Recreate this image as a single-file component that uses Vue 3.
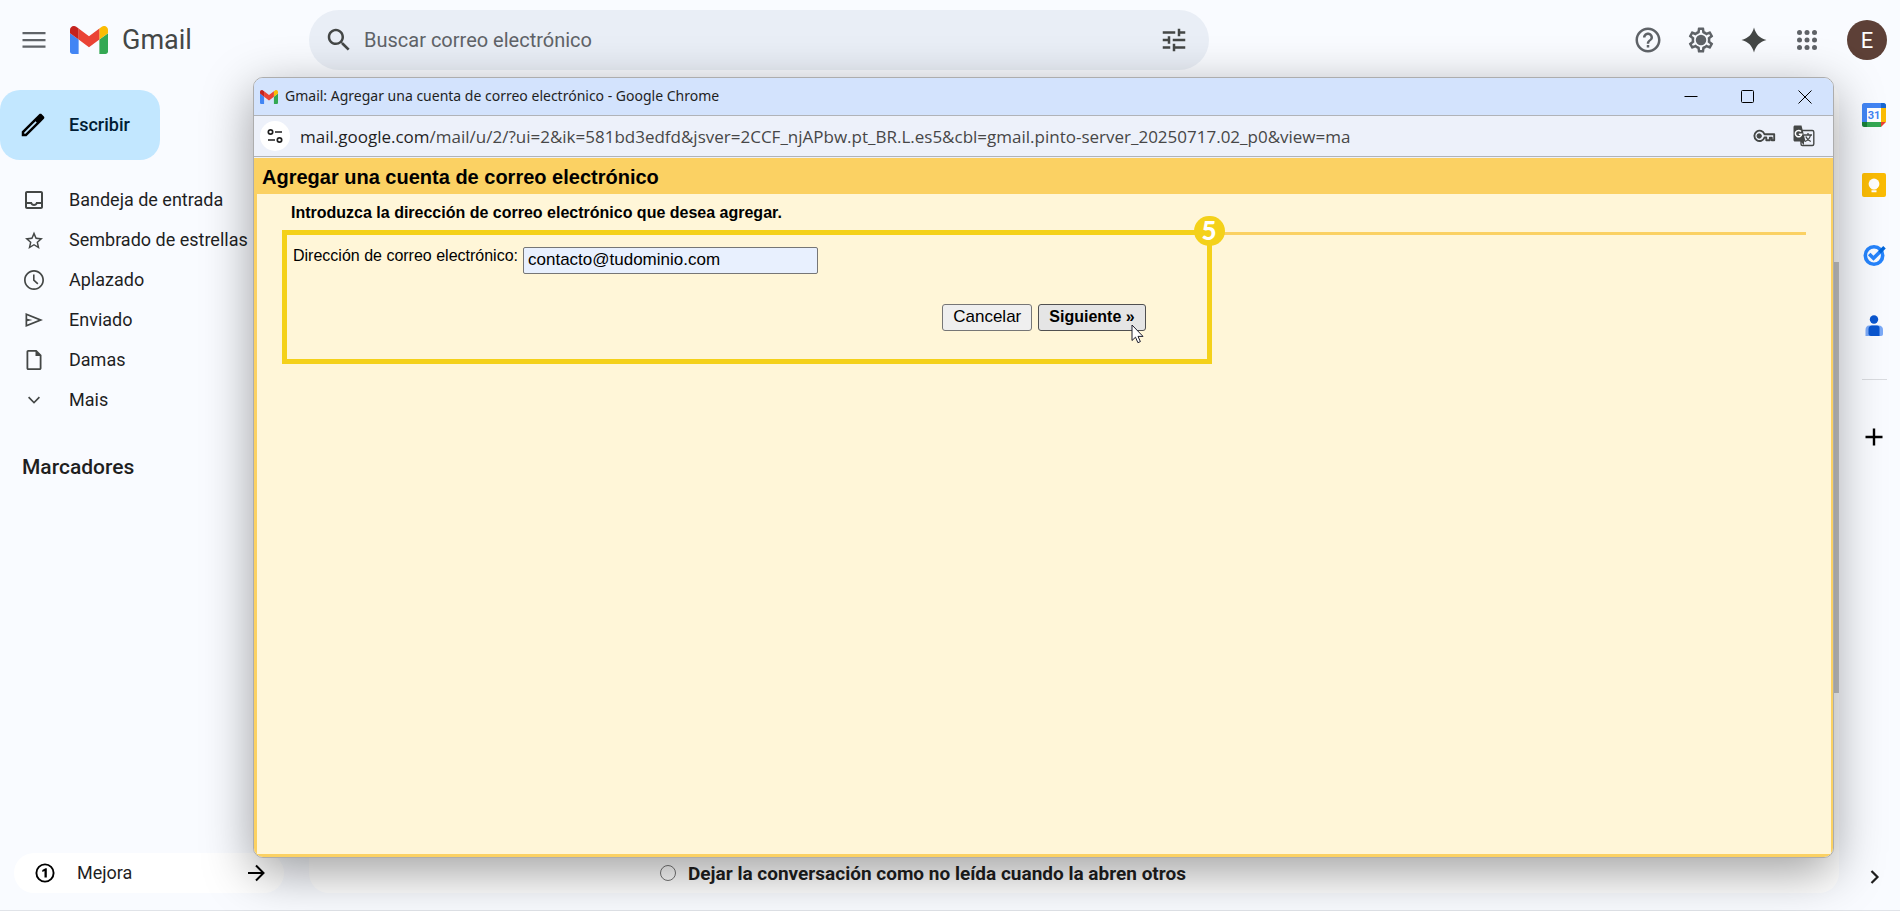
<script setup>
import { ref } from 'vue'

const email = ref('contacto@tudominio.com')
const query = ref('')

const folders = [
  { label: 'Bandeja de entrada', icon: 'M19 3H5c-1.1 0-2 .9-2 2v14c0 1.1.9 2 2 2h14c1.1 0 2-.9 2-2V5c0-1.1-.9-2-2-2zm0 16H5v-3h3.56c.69 1.19 1.97 2 3.45 2s2.75-.81 3.45-2H19v3zm0-5h-4.99c0 1.1-.9 2-2 2s-2-.9-2-2H5V5h14v9z' },
  { label: 'Sembrado de estrellas', icon: 'M21 10.2l-6.5-.6L12 3.600 9.500 9.600 3 10.200l4.900 4.300L6.400 21 12 17.600l5.600 3.400-1.500-6.500L21 10.200zM12 15.900l-3.400 2 .9-3.900-3-2.600 3.900-.3L12 7.400l1.600 3.700 3.900.3-3 2.600.9 3.900-3.400-2z' },
  { label: 'Aplazado', icon: 'M12 2C6.500 2 2 6.500 2 12s4.500 10 10 10 10-4.500 10-10S17.500 2 12 2zm0 18.300c-4.600 0-8.300-3.700-8.300-8.300S7.400 3.700 12 3.700s8.300 3.700 8.300 8.300-3.700 8.300-8.300 8.300zM12.600 6.500h-1.600v6l4.300 4 1.100-1.200-3.800-3.600z' },
  { label: 'Enviado', icon: 'M3.500 5v14L21 12 3.500 5zm1.700 2.600L16.300 12 5.200 16.400v-3.200L10.500 12 5.200 10.800V7.600z' },
  { label: 'Damas', icon: 'M14.500 2H6.200C5.200 2 4.500 2.800 4.500 3.800v16.400c0 1 .8 1.800 1.800 1.800h11.400c1 0 1.800-.8 1.800-1.800V7L14.500 2zm3.200 18.200H6.300V3.800h7.200V8h4.200v12.200z' },
  { label: 'Mais', icon: 'M7.200 8.600L12 13.400l4.800-4.800L18 9.800l-6 6-6-6z' },
]
</script>

<template>
  <div class="app">
    <header class="topbar">
      <button class="icon-btn menu" aria-label="Menú principal">
        <svg width="24" height="24" viewBox="0 0 24 24"><path fill="#5f6368" d="M.500 4h23v2.200H.500zM.500 11h23v2.200H.500zM.500 17.500h23v2.200H.500z" /></svg>
      </button>
      <a class="brand" href="#">
        <svg width="38" height="28" viewBox="52 42 88 66" preserveAspectRatio="none">
          <path fill="#4285f4" d="M58 108h14V74L52 59v43c0 3.320 2.690 6 6 6" />
          <path fill="#34a853" d="M120 108h14c3.320 0 6-2.690 6-6V59l-20 15" />
          <path fill="#fbbc04" d="M120 48v26l20-15v-8c0-7.420-8.470-11.650-14.400-7.200" />
          <path fill="#ea4335" d="M72 74V48l24 18 24-18v26L96 92" />
          <path fill="#c5221f" d="M52 51v8l20 15V48l-5.600-4.200c-5.940-4.450-14.400-.22-14.400 7.200" />
        </svg>
        <span>Gmail</span>
      </a>
      <form class="search" role="search" @submit.prevent>
        <button class="icon-btn" aria-label="Buscar">
          <svg width="30" height="30" viewBox="0 0 24 24"><path fill="#444746" d="M15.500 14h-.79l-.28-.27C15.410 12.590 16 11.110 16 9.500 16 5.910 13.090 3 9.500 3S3 5.910 3 9.500 5.910 16 9.500 16c1.610 0 3.090-.59 4.230-1.570l.27.28v.79l5 4.990L20.490 19l-4.990-5zm-6 0C7.010 14 5 11.990 5 9.500S7.010 5 9.500 5 14 7.010 14 9.500 11.990 14 9.500 14z" /></svg>
        </button>
        <input v-model="query" type="text" aria-label="Buscar correo" placeholder="Buscar correo electrónico" />
        <button class="icon-btn" type="button" aria-label="Opciones de búsqueda">
          <svg width="30" height="30" viewBox="0 0 24 24"><path fill="#444746" d="M3 17v2h6v-2H3zM3 5v2h10V5H3zm10 16v-2h8v-2h-8v-2h-2v6h2zM7 9v2H3v2h4v2h2V9H7zm14 4v-2H11v2h10zm-6-4h2V7h4V5h-4V3h-2v6z" /></svg>
        </button>
      </form>
      <div class="tools">
        <button class="icon-btn" aria-label="Ayuda">
          <svg width="30" height="30" viewBox="0 0 24 24"><path fill="#5f6368" d="M11 18h2v-2h-2v2zm1-16C6.480 2 2 6.480 2 12s4.480 10 10 10 10-4.480 10-10S17.520 2 12 2zm0 18c-4.410 0-8-3.590-8-8s3.590-8 8-8 8 3.590 8 8-3.590 8-8 8zm0-14c-2.210 0-4 1.790-4 4h2c0-1.100.9-2 2-2s2 .9 2 2c0 2-3 1.750-3 5h2c0-2.250 3-2.500 3-5 0-2.210-1.790-4-4-4z" /></svg>
        </button>
        <button class="icon-btn" aria-label="Configuración">
          <svg width="30" height="30" viewBox="0 0 24 24" fill="#5f6368"><path d="M19.430 12.980c.04-.32.07-.64.07-.98s-.03-.66-.07-.98l2.110-1.650c.19-.15.24-.42.12-.64l-2-3.460c-.09-.16-.26-.25-.44-.25-.06 0-.12.01-.17.03l-2.490 1c-.52-.4-1.080-.73-1.690-.98l-.38-2.650C14.460 2.180 14.250 2 14 2h-4c-.25 0-.46.18-.49.42l-.38 2.650c-.61.25-1.170.59-1.690.98l-2.490-1c-.06-.02-.12-.03-.18-.03-.17 0-.34.09-.43.25l-2 3.460c-.13.22-.07.49.12.64l2.110 1.650c-.04.32-.07.65-.07.98s.03.66.07.98l-2.110 1.650c-.19.15-.24.42-.12.64l2 3.460c.09.16.26.25.44.25.06 0 .12-.01.17-.03l2.490-1c.52.4 1.080.73 1.690.98l.38 2.650c.03.24.24.42.49.42h4c.25 0 .46-.18.49-.42l.38-2.650c.61-.25 1.170-.59 1.690-.98l2.490 1c.06.02.12.03.18.03.17 0 .34-.09.43-.25l2-3.460c.12-.22.07-.49-.12-.64l-2.110-1.650zm-1.980-1.710c.04.31.05.52.05.73 0 .21-.02.43-.05.73l-.14 1.130.89.7 1.080.84-.7 1.210-1.270-.51-1.040-.42-.9.68c-.43.32-.84.56-1.250.73l-1.060.43-.16 1.130-.2 1.350h-1.400l-.19-1.350-.16-1.130-1.060-.43c-.43-.18-.83-.41-1.230-.71l-.91-.7-1.060.43-1.270.51-.7-1.210 1.080-.84.89-.7-.14-1.130c-.03-.31-.05-.54-.05-.74s.02-.43.05-.73l.14-1.130-.89-.7-1.080-.84.7-1.210 1.270.51 1.040.42.9-.68c.43-.32.84-.56 1.250-.73l1.060-.43.16-1.130.2-1.350h1.390l.19 1.350.16 1.130 1.060.43c.43.18.83.41 1.230.71l.91.7 1.060-.43 1.270-.51.7 1.210-1.070.85-.89.7.14 1.130z" /><circle cx="12" cy="12" r="4.200" /></svg>
        </button>
        <button class="icon-btn" aria-label="Gemini">
          <svg width="30" height="30" viewBox="0 0 24 24"><path fill="#444746" d="M12 2c1.500 5.500 4.500 8.600 10 10-5.500 1.400-8.500 4.500-10 10-1.500-5.500-4.500-8.600-10-10 5.500-1.400 8.500-4.500 10-10z" /></svg>
        </button>
        <button class="icon-btn" aria-label="Aplicaciones de Google">
          <svg width="30" height="30" viewBox="0 0 24 24" fill="#5f6368"><circle v-for="n in 9" :key="n" :cx="6 + ((n - 1) % 3) * 6" :cy="6 + Math.floor((n - 1) / 3) * 6" r="2" /></svg>
        </button>
      </div>
      <button class="avatar" aria-label="Cuenta de Google">E</button>
    </header>

    <div class="body">
      <aside class="sidebar">
        <button class="compose">
          <svg width="30" height="30" viewBox="0 0 24 24"><path d="M14.060 9.020l.92.92L5.920 19H5v-.92l9.060-9.060M18 3c-.45 0-.81.1-1.100.39l-1.770 1.730L14.060 6.190 3 17.250V21h3.750L17.810 9.940l2.900-2.900c.5-.6.5-1.220 0-1.810l-1.740-1.840C18.700 3.100 18.400 3 18 3z" /></svg>
          <span>Escribir</span>
        </button>
        <nav class="folders" aria-label="Carpetas">
          <a v-for="f in folders" :key="f.label" href="#">
            <svg width="24" height="24" viewBox="0 0 24 24"><path fill="#444746" :d="f.icon" /></svg>
            <span>{{ f.label }}</span>
          </a>
        </nav>
        <h2>Marcadores</h2>
        <a class="upgrade" href="#">
          <svg width="24" height="24" viewBox="0 0 24 24"><circle cx="12" cy="12" r="8.600" fill="none" stroke="#000" stroke-width="1.900" /><path d="M11.500 16.500V10l-2.200 1V9l3.200-1.800h1.300v9.300z" /></svg>
          <span>Mejora</span>
          <svg width="20" height="20" viewBox="0 0 20 20" fill="none" stroke="#000" stroke-width="2"><path d="M1 10h15M9 2.500l7.500 7.500-7.500 7.500" /></svg>
        </a>
      </aside>

      <main class="content">
        <div class="scrollbar"></div>
        <label class="option">
          <input type="radio" name="leido" />
          Dejar la conversación como no leída cuando la abren otros
        </label>
      </main>

      <aside class="rail">
        <a href="#" aria-label="Calendar">
          <svg width="24" height="24" viewBox="0 0 24 24">
            <path fill="#fff" d="M5 5h14v14H5z" />
            <path fill="#4285f4" d="M2 0h17v5H5v14H0V2C0 1 1 0 2 0z" />
            <path fill="#1967d2" d="M19 0h3c1 0 2 1 2 2v3h-5z" />
            <path fill="#fbbc04" d="M19 5h5v14h-5z" />
            <path fill="#34a853" d="M5 19h14v5H5z" />
            <path fill="#188038" d="M0 19h5v5H2c-1 0-2-1-2-2z" />
            <path fill="#ea4335" d="M19 19h5l-5 5z" />
            <text x="12" y="16" text-anchor="middle" class="day">31</text>
          </svg>
        </a>
        <a href="#" aria-label="Keep">
          <svg width="24" height="24" viewBox="0 0 24 24"><rect width="24" height="24" rx="2" fill="#fbbc04" /><circle cx="12" cy="11" r="5.400" fill="#fff" /><path fill="#fff" d="M9.500 14h5v2.200h-5zM9.500 17.200h5v2h-5z" /></svg>
        </a>
        <a href="#" aria-label="Tasks">
          <svg width="24" height="24" viewBox="0 0 24 24">
            <circle cx="12" cy="12.500" r="8.700" fill="none" stroke="#2684fc" stroke-width="3.600" />
            <path fill="none" stroke="#2684fc" stroke-width="3.600" d="M7.200 11l4.300 4.300 7-7" />
            <path fill="none" stroke="#0066da" stroke-width="3.600" d="M17.500 9.300l5-5" />
          </svg>
        </a>
        <a href="#" aria-label="Contactos">
          <svg width="24" height="24" viewBox="0 0 24 24">
            <path fill="#7baaf7" d="M7 12.500h9.500c3 0 4.500 1.500 4.500 4.500v4c0 1-.7 2-2 2H3.500V17c0-3 1.500-4.500 3.500-4.500z" />
            <path fill="#0b57d0" d="M10 12.500h5c1.600 0 2.500 1 2.500 2.500v8H9c-1.500 0-2.500-1-2.500-2.500V16c0-2 1.500-3.500 3.500-3.500z" />
            <circle cx="12" cy="6.500" r="4.200" fill="#0b57d0" />
          </svg>
        </a>
        <hr />
        <button class="icon-btn" aria-label="Obtener complementos">
          <svg width="24" height="24" viewBox="0 0 24 24" stroke="#000" stroke-width="2.400"><path d="M12 3.500v17M3.500 12h17" /></svg>
        </button>
        <button class="icon-btn collapse" aria-label="Ocultar panel lateral">
          <svg width="24" height="24" viewBox="0 0 24 24" fill="none" stroke="#1f1f1f" stroke-width="2.200"><path d="M9.500 6l6 6-6 6" /></svg>
        </button>
      </aside>
    </div>

    <section class="window" role="dialog" aria-labelledby="window-title">
      <div class="titlebar">
        <svg width="18" height="14" viewBox="52 42 88 66" preserveAspectRatio="none">
          <path fill="#4285f4" d="M58 108h14V74L52 59v43c0 3.320 2.690 6 6 6" />
          <path fill="#34a853" d="M120 108h14c3.320 0 6-2.690 6-6V59l-20 15" />
          <path fill="#fbbc04" d="M120 48v26l20-15v-8c0-7.420-8.470-11.650-14.400-7.200" />
          <path fill="#ea4335" d="M72 74V48l24 18 24-18v26L96 92" />
          <path fill="#c5221f" d="M52 51v8l20 15V48l-5.600-4.200c-5.940-4.450-14.400-.22-14.400 7.200" />
        </svg>
        <span id="window-title">Gmail: Agregar una cuenta de correo electrónico - Google Chrome</span>
        <div class="controls">
          <button aria-label="Minimizar"><svg width="14" height="14" viewBox="0 0 14 14"><path d="M.5 6.500h13" /></svg></button>
          <button aria-label="Maximizar"><svg width="14" height="14" viewBox="0 0 14 14"><rect x=".5" y=".5" width="12" height="12" rx="1" /></svg></button>
          <button aria-label="Cerrar"><svg width="14" height="14" viewBox="0 0 14 14"><path d="M.5.5l13 13M13.500.5l-13 13" /></svg></button>
        </div>
      </div>
      <div class="addressbar">
        <button class="site-info" aria-label="Información del sitio">
          <svg width="16" height="16" viewBox="0 0 16 16" fill="none" stroke="#1f1f1f" stroke-width="1.700"><circle cx="3.500" cy="4" r="2.200" /><path d="M8 4h7M1 12h7" /><circle cx="12.500" cy="12" r="2.200" /></svg>
        </button>
        <div class="url"><b>mail.google.com</b>/mail/u/2/?ui=2&amp;ik=581bd3edfd&amp;jsver=2CCF_njAPbw.pt_BR.L.es5&amp;cbl=gmail.pinto-server_20250717.02_p0&amp;view=ma</div>
        <button class="icon-btn" aria-label="Administrar contraseñas">
          <svg width="24" height="24" viewBox="0 0 24 24" fill="none" stroke="#444746" stroke-width="1.900"><path d="M12.500 10.200h9.700v6h-2.400v-2.500h-2v2.500h-3.500v-2.700h-1.800a5.200 5.200 0 1 1 0-3.300z" stroke-linejoin="round" /><circle cx="7.200" cy="12" r="2.200" fill="#444746" stroke-width="1" /></svg>
        </button>
        <button class="icon-btn" aria-label="Traducir esta página">
          <svg width="24" height="24" viewBox="0 0 24 24">
            <rect x="9" y="6.500" width="12.800" height="15" rx="1.500" fill="#edf1fa" stroke="#444746" stroke-width="1.400" />
            <path fill="none" stroke="#444746" stroke-width="1.300" d="M12 11h8M16 9v2M18.500 11c-.5 3-3 5.500-5.500 6.500M13.800 12.500c.8 2.200 2.800 4 5 5" />
            <path fill="#444746" d="M3 1.500h6.500l4 16-1.500 0 0 3.500-3.500-3.500H3c-.9 0-1.500-.6-1.500-1.500V3c0-.9.6-1.500 1.500-1.500z" />
            <path fill="none" stroke="#fff" stroke-width="1.500" d="M9 7.500a3.200 3.200 0 1 0 .7 2.800H6.800" />
          </svg>
        </button>
      </div>
      <div class="page">
        <h1>Agregar una cuenta de correo electrónico</h1>
        <div class="sheet">
          <p>Introduzca la dirección de correo electrónico que desea agregar.</p>
          <hr />
          <form class="highlight" @submit.prevent>
            <div class="field">
              <label for="email">Dirección de correo electrónico:</label>
              <input id="email" v-model="email" type="text" />
            </div>
            <div class="actions">
              <button type="button">Cancelar</button>
              <button type="submit" class="next">Siguiente »
                <svg class="cursor" width="14" height="20" viewBox="0 0 14 20"><path fill="#fff" stroke="#1c1c2c" d="M1 1v15.500l3.500-3.300 2.400 5.500 2.500-1.100-2.400-5.200h5z" /></svg>
              </button>
            </div>
            <div class="badge">5</div>
          </form>
        </div>
      </div>
    </section>
  </div>
</template>

<style>
html,
body {
  overflow: hidden;
  background: #f8fafd;
}
</style>

<style scoped>
.app {
  position: relative;
  box-sizing: border-box;
  display: flex;
  flex-direction: column;
  height: 100vh;
  background: #f9fbff;
  border-bottom: 1px solid #e0e3e8;
  color: #1f1f1f;
  font-family: Roboto, "Liberation Sans", sans-serif;
}
svg { display: block; flex: none; }
button { font: inherit; color: inherit; cursor: default; }
a { color: inherit; text-decoration: none; }
.icon-btn { display: flex; padding: 0; border: 0; background: none; }

.topbar {
  display: flex;
  align-items: center;
  flex: none;
  height: 80px;
  padding: 0 13px 0 22px;
}
.brand {
  display: flex;
  align-items: center;
  gap: 14px;
  width: 239px;
  margin-left: 24px;
  color: #444746;
  font-size: 27px;
}
.search {
  box-sizing: border-box;
  display: flex;
  align-items: center;
  gap: 10px;
  flex: 0 1 900px;
  height: 60px;
  padding: 0 20px 0 15px;
  border-radius: 30px;
  background: #e9eef6;
}
.search input {
  flex: 1;
  min-width: 0;
  padding: 0;
  border: 0;
  outline: 0;
  background: none;
  font: 20px Roboto, sans-serif;
}
.search input::placeholder { color: #5f6368; opacity: 1; }
.tools { display: flex; gap: 23px; margin: 0 25px 0 auto; }
.avatar {
  width: 40px;
  height: 40px;
  padding: 0;
  border: 0;
  border-radius: 50%;
  background: #5d4037;
  color: #fff;
  font-size: 22px;
}

.body { display: flex; flex: 1; min-height: 0; }
.sidebar {
  box-sizing: border-box;
  display: flex;
  flex-direction: column;
  flex: none;
  width: 309px;
  padding: 10px 25px 17px 0;
}
.compose {
  display: flex;
  align-items: center;
  align-self: flex-start;
  gap: 21px;
  height: 70px;
  padding: 0 30px 0 18px;
  border: 0;
  border-radius: 20px;
  background: #c2e7ff;
  color: #001d35;
  font-size: 18px;
  font-weight: 500;
}
.compose span,
.folders span,
.upgrade span { padding-bottom: 2px; }
.folders { margin-top: 20px; }
.folders a {
  display: flex;
  align-items: center;
  gap: 23px;
  height: 40px;
  padding-left: 22px;
  font-size: 18px;
  white-space: nowrap;
}
.sidebar h2 { margin: 35px 0 0 22px; font-size: 21px; font-weight: 500; line-height: 24px; }
.upgrade {
  display: flex;
  align-items: center;
  height: 40px;
  margin: auto 0 0 14px;
  padding: 0 17px 0 19px;
  border-radius: 20px;
  background: #fff;
  font-size: 18px;
}
.upgrade span { flex: 1; margin-left: 20px; }

.content {
  position: relative;
  display: flex;
  align-items: flex-end;
  flex: 1;
  margin-bottom: 17px;
  border-radius: 20px;
  background: #fff;
}
.scrollbar {
  position: absolute;
  top: 182px;
  right: 0;
  width: 12px;
  height: 431px;
  background: #c7c7c7;
}
.option {
  display: flex;
  align-items: center;
  gap: 12px;
  height: 40px;
  margin-left: 351px;
  font-size: 19px;
  font-weight: 700;
}
.option input { width: 16px; height: 16px; margin: 0; }

.rail {
  display: flex;
  flex-direction: column;
  align-items: center;
  gap: 46px;
  flex: none;
  box-sizing: border-box;
  width: 52px;
  margin-left: 9px;
  padding: 23px 0 21px;
}
.rail hr { width: 25px; height: 1px; margin: -4px 0 -1px; border: 0; background: #dadce0; }
.collapse { margin-top: auto; }
.day { fill: #4285f4; font: bold 11px Roboto, sans-serif; }

.window {
  position: absolute;
  inset: 77px 66px 52px 253px;
  display: flex;
  flex-direction: column;
  overflow: hidden;
  border: 1px solid #adadad;
  border-radius: 10px;
  background: #edf1fa;
  box-shadow: 0 14px 50px rgba(0, 0, 0, 0.38);
}
.titlebar {
  display: flex;
  align-items: center;
  gap: 7px;
  flex: none;
  height: 37px;
  padding-left: 6px;
  border-bottom: 1px solid #b0b3b8;
  background: #d3e3fd;
  color: #1f1f1f;
  font: 14px "Noto Sans", sans-serif;
}
.titlebar > span { padding-bottom: 2px; }
.controls { display: flex; margin-left: auto; }
.controls button {
  display: grid;
  place-items: center;
  width: 57px;
  height: 36px;
  padding: 0;
  border: 0;
  background: none;
}
.controls svg { fill: none; stroke: #000; }
.addressbar {
  display: flex;
  align-items: center;
  flex: none;
  height: 40px;
  gap: 16px;
  padding: 0 17px 0 6px;
  border-bottom: 1px solid #b0b3b8;
}
.site-info {
  display: grid;
  place-items: center;
  width: 30px;
  height: 30px;
  padding: 0;
  border: 0;
  border-radius: 50%;
  background: #fff;
}
.url {
  flex: 1;
  margin-left: -6px;
  color: #474747;
  font: 17px "Open Sans", sans-serif;
  white-space: nowrap;
}
.url b { color: #1f1f1f; font-weight: 400; }

.page {
  display: flex;
  flex-direction: column;
  flex: 1;
  margin-top: 1px;
  padding: 0 2px 3px 3px;
  background: #fbd163;
  color: #000;
  font-family: "Liberation Sans", Arial, sans-serif;
}
.page h1 { margin: 0; padding: 2px 0 0 5px; font-size: 20px; line-height: 34px; }
.sheet { flex: 1; padding: 9px 25px 0 25px; background: #fff6d8; }
.sheet p { margin: 0 0 9px 9px; font-size: 16px; font-weight: 700; line-height: 20px; }
.sheet hr { height: 3px; margin: 0; border: 0; background: #fbd163; }
.highlight {
  position: relative;
  box-sizing: border-box;
  width: 61%;
  height: 134px;
  margin-top: -5px;
  padding: 12px 61px 0 6px;
  border: 5px solid #f4d11a;
}
.field { display: flex; align-items: flex-start; gap: 5px; font-size: 16px; line-height: 18px; }
.field input {
  box-sizing: border-box;
  width: 295px;
  height: 27px;
  padding: 0 4px 2px;
  border: 1px solid #767676;
  border-radius: 2px;
  outline: 0;
  background: #e8f0fe;
  color: #000;
  font: 17px "Liberation Sans", Arial, sans-serif;
}
.actions { display: flex; justify-content: flex-end; gap: 6px; margin-top: 30px; }
.actions button {
  position: relative;
  height: 27px;
  padding: 0 10px 2px;
  border: 1px solid #767676;
  border-radius: 3px;
  background: #efefef;
  font-size: 17px;
  line-height: 20px;
}
.actions .next { border-color: #505050; background: #e5e5e5; font-size: 16px; font-weight: 700; }
.cursor { position: absolute; left: 92px; top: 19px; }
.badge {
  position: absolute;
  top: -19px;
  right: -18px;
  width: 31px;
  height: 30px;
  border-radius: 16px;
  background: #f4d11a;
  color: #fff;
  font: 900 26px/28px Lato, sans-serif;
  text-align: center;
}
</style>
